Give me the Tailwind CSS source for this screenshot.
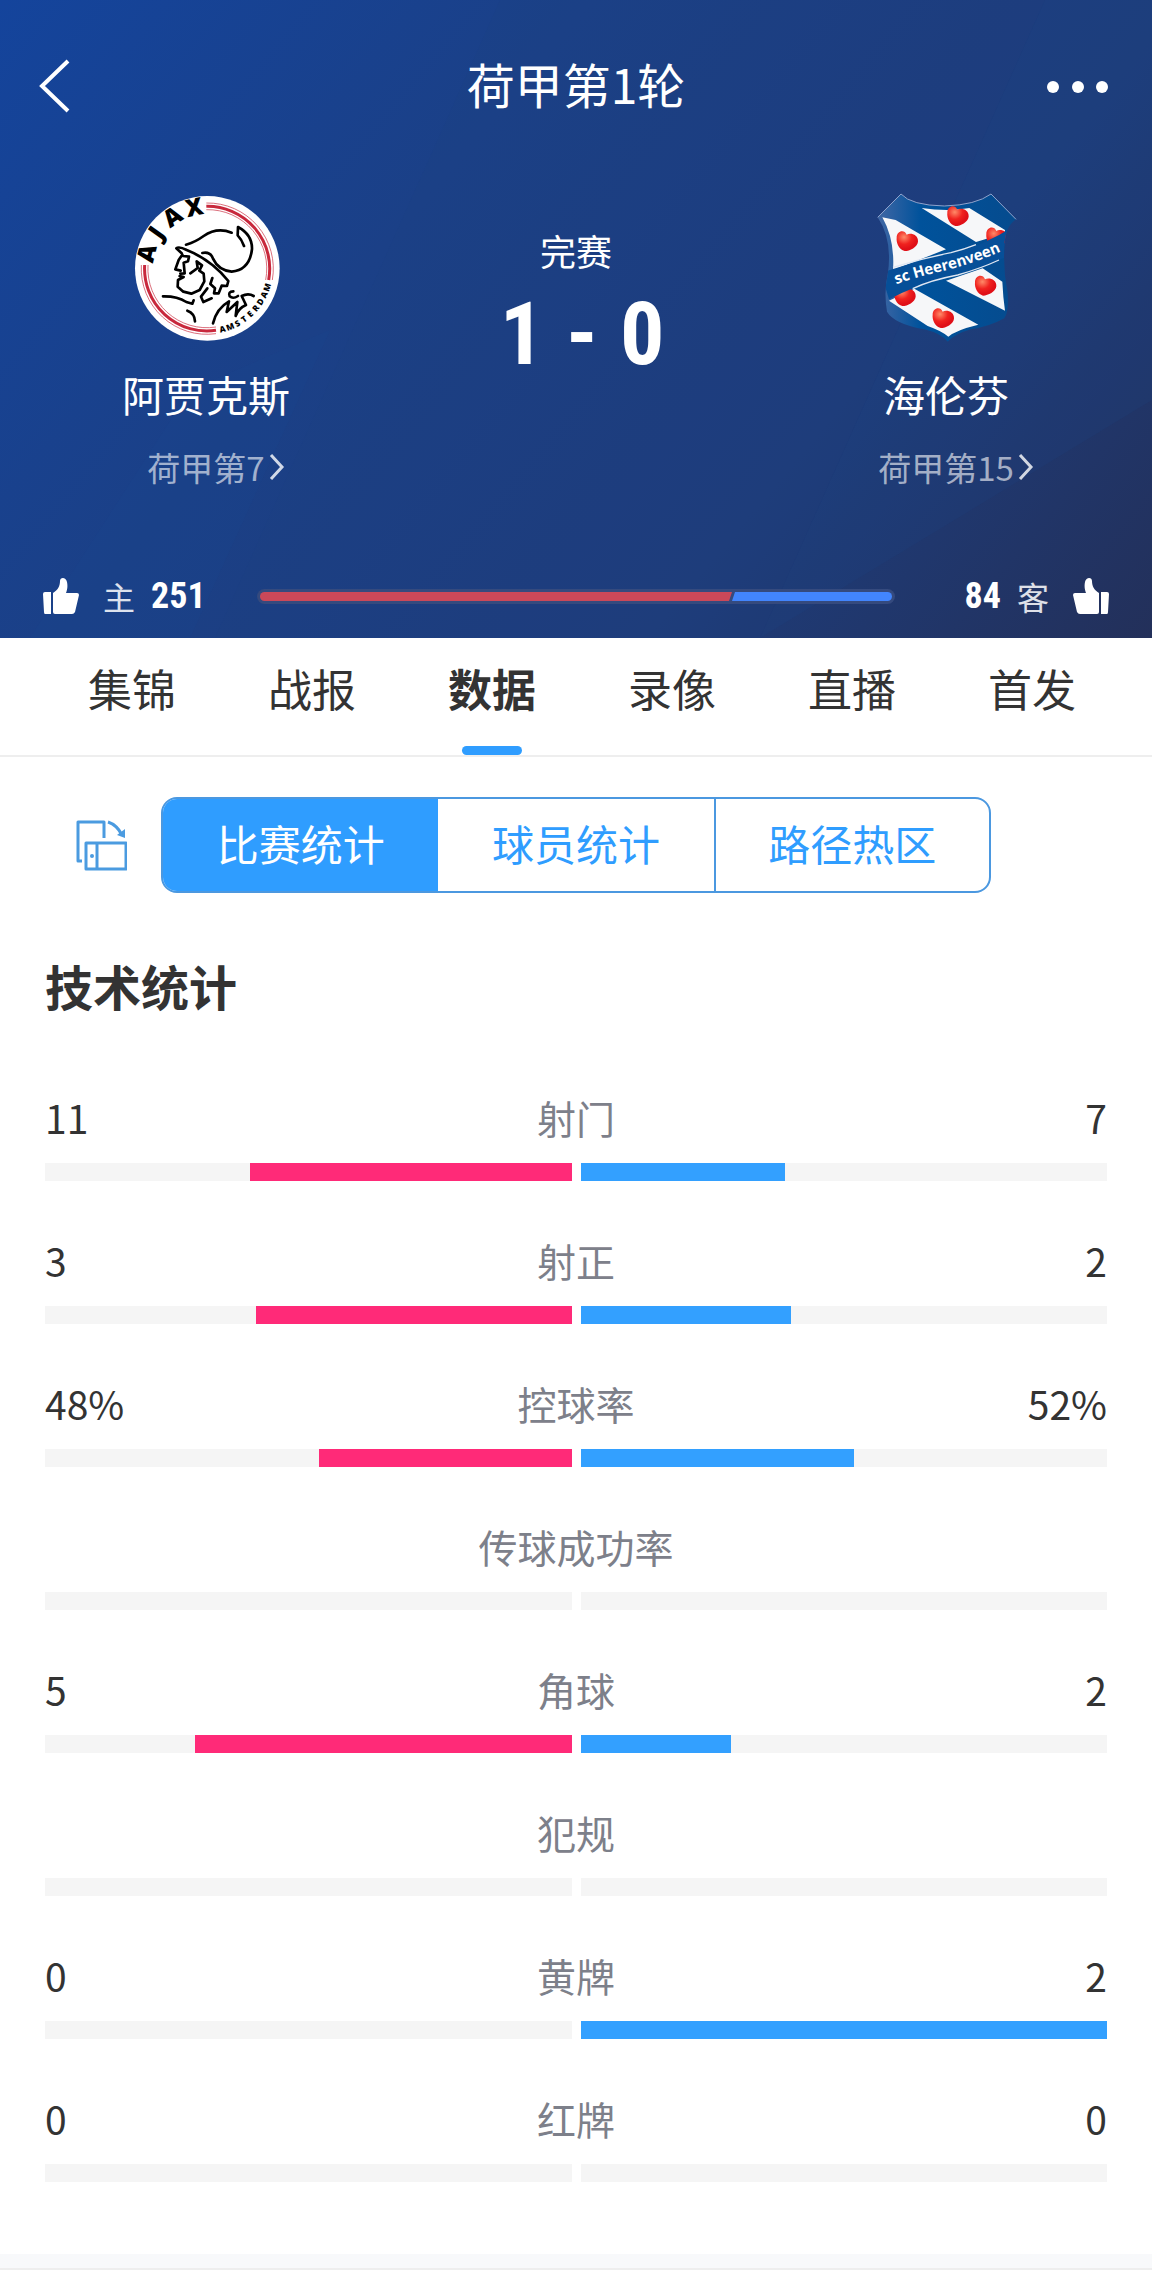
<!DOCTYPE html>
<html lang="zh-CN">
<head>
    <meta charset="UTF-8">
    <meta name="viewport" content="width=device-width, initial-scale=1.0">
    <title>荷甲第1轮</title>
    <script src="https://cdn.jsdelivr.net/npm/@tailwindcss/browser@4"></script>
</head>
<body class="bg-white text-[#333] font-['Noto_Sans_CJK_SC',sans-serif]">
    <!-- Match header -->
    <header class="relative overflow-hidden bg-linear-[130deg,#14449c_0%,#1b4087_35%,#1e3c7a_70%,#23305a_100%] text-white">
        <svg class="absolute inset-0 w-full h-full" viewBox="0 0 1152 638" preserveAspectRatio="none" aria-hidden="true">
            <path d="M500 0H1045L760 638H215Z" fill="#1d3f83" opacity=".2"/>
            <path d="M1045 0H1152V400L760 638Z" fill="#1a4a90" opacity=".15"/>
            <path d="M190 390L330 330L190 638H30Z" fill="#1c4a94" opacity=".15"/>
        </svg>

        <nav class="relative h-[172px] px-9 flex items-center justify-between">
            <button class="w-[72px]" aria-label="返回">
                <svg class="w-9 h-14" viewBox="0 0 36 56" fill="none" stroke="#fff" stroke-width="4"><path d="M32 3L6 28L32 53"/></svg>
            </button>
            <h1 class="pb-1.5 text-[48px] leading-[64px]">荷甲第1轮</h1>
            <button class="w-[72px]" aria-label="更多">
                <svg class="w-[72px] h-14" viewBox="0 0 72 56" fill="#fff"><circle cx="9" cy="29" r="6"/><circle cx="34" cy="29" r="6"/><circle cx="58" cy="29" r="6"/></svg>
            </button>
        </nav>

        <div class="relative px-[21px] pt-2 grid grid-cols-3">
            <!-- Home team -->
            <div class="flex flex-col items-center">
                <svg class="w-[170px] h-[170px]" viewBox="0 0 510 510" fill="none" role="img" aria-label="AJAX">
                    <circle cx="259" cy="265" r="217" fill="#fff"/>
                    <g stroke="#c8283c">
                        <path stroke-width="9" d="M256 79A187 187 0 0 1 443 300M71 255A187 187 0 0 0 285 451"/>
                        <path stroke-width="2" d="M256 69A197 197 0 0 1 454 300M61 255A197 197 0 0 0 285 461M256 89A177 177 0 0 1 434 300M81 255A177 177 0 0 0 285 441"/>
                    </g>
                    <g id="ajaxLetters" fill="#000" text-anchor="middle" font-family="Open Sans, sans-serif" font-weight="800"></g>
                    <g stroke="#000" stroke-width="8" stroke-linecap="round" stroke-linejoin="round">
                        <path d="M195 194Q222 187 248 168Q288 140 332 158"/>
                        <path d="M369 198Q362 178 350 166L351 141Q394 164 393 207Q386 270 332 275Q292 271 276 236Q268 214 244 219"/>
                        <path d="M182 220L166 205Q174 198 197 210Q272 240 322 303L318 318L302 317L293 340L279 340L282 325L268 312L274 294"/>
                        <path d="M184 224L173 240L163 268L179 272M186 228L204 230L201 244L188 248L191 280L178 281M176 288L188 291L171 300L170 320L187 335L211 341L236 330L250 304L248 281L235 272L243 256L227 244L230 264L208 280"/>
                        <path d="M126 349Q168 348 196 366L214 371L218 361"/>
                        <path d="M199 392Q221 400 222 424"/>
                        <path d="M259 325L240 350L247 366L272 355"/>
                        <path d="M276 430Q287 385 324 364L317 396L349 366L344 408Q352 385 375 375L362 348Q382 338 398 348M337 334Q320 335 326 349Q336 358 351 348"/>
                    </g>
                </svg>
                <div class="mt-3.5 text-[42px] leading-[60px]">阿贾克斯</div>
                <a href="#" class="mt-[19px] pl-5 flex items-center gap-1 text-[33px] leading-[48px] text-white/60">荷甲第7
                    <svg class="w-4 h-7" viewBox="0 0 16 28" fill="none" stroke="#fff" stroke-opacity=".8" stroke-width="3"><path d="M2 2L13 14L2 26"/></svg>
                </a>
            </div>

            <!-- Score -->
            <div class="mt-[46px] flex flex-col items-center">
                <div class="text-[36px] leading-[48px]">完赛</div>
                <div class="mt-3 pl-3 flex gap-[22px] text-[88px] leading-[96px] font-bold font-['Roboto_Condensed',Roboto,sans-serif]">
                    <span>1</span><span>-</span><span>0</span>
                </div>
            </div>

            <!-- Away team -->
            <div class="flex flex-col items-center">
                <svg class="w-[170px] h-[170px]" viewBox="0 0 510 510" role="img" aria-label="sc Heerenveen">
                    <defs>
                        <clipPath id="shield"><path d="M120 42Q150 76 250 78Q345 75 390 42L465 118Q432 140 430 200Q426 270 440 340Q444 395 430 415Q385 440 330 448Q285 460 260 485Q240 460 190 448Q100 432 78 395Q68 335 80 285Q96 180 50 112Z"/></clipPath>
                        <linearGradient id="shine" x1="0" y1="0" x2="1" y2="0"><stop offset="0" stop-color="#5a6fa8"/><stop offset=".35" stop-color="#00529b"/><stop offset="1" stop-color="#064a8c"/></linearGradient>
                        <radialGradient id="heart" cx=".35" cy=".3" r=".6"><stop offset="0" stop-color="#ff8a68"/><stop offset=".6" stop-color="#f0221f"/><stop offset="1" stop-color="#e01018"/></radialGradient>
                        <path id="heartShape" d="M-32 -8C-32 -30 -8 -34 -2 -17C8 -24 34 -18 32 4C30 20 8 32 -8 32C-24 28 -34 8 -32 -8Z"/>
                        <path id="ribbonLine" d="M106 313Q170 290 250 272Q340 250 425 212"/>
                    </defs>
                    <g clip-path="url(#shield)">
                        <path fill="url(#shine)" d="M0 0H510V510H0Z"/>
                        <path fill="#f6f7f9" d="M64 112L104 120L255 208L96 270Q102 180 64 112Z"/>
                        <path fill="#f6f7f9" d="M182 84Q260 96 325 84L432 150V160L345 186Z"/>
                        <path fill="#f6f7f9" d="M255 302L365 265L424 305Q426 350 432 392Z"/>
                        <path fill="#f6f7f9" d="M84 362L160 326L352 434Q285 450 262 470Q240 452 200 438Z"/>
                        <g fill="url(#heart)">
                            <use href="#heartShape" x="139" y="181"/>
                            <use href="#heartShape" x="291" y="106"/>
                            <use href="#heartShape" x="408" y="170"/>
                            <use href="#heartShape" x="374" y="315"/>
                            <use href="#heartShape" x="132" y="346"/>
                            <use href="#heartShape" x="247" y="412"/>
                        </g>
                        <path fill="#064f98" d="M60 278Q180 240 270 222Q370 196 460 138V220Q380 260 270 286Q160 318 84 358Z"/>
                        <path fill="none" stroke="#dfe6f2" stroke-width="4" d="M96 262Q180 236 270 218Q310 208 345 194M155 326Q210 300 290 285Q360 265 414 240"/>
                    </g>
                    <path fill="none" stroke="#8fa3cc" stroke-width="3" d="M120 42Q150 76 250 78Q345 75 390 42L465 118M120 42L50 112"/>
                    <text fill="#fff" font-family="Open Sans, sans-serif" font-size="45" font-weight="700"><textPath href="#ribbonLine">sc Heerenveen</textPath></text>
                </svg>
                <div class="mt-3.5 text-[42px] leading-[60px]">海伦芬</div>
                <a href="#" class="mt-[19px] pl-5 flex items-center gap-1 text-[33px] leading-[48px] text-white/60">荷甲第15
                    <svg class="w-4 h-7" viewBox="0 0 16 28" fill="none" stroke="#fff" stroke-opacity=".8" stroke-width="3"><path d="M2 2L13 14L2 26"/></svg>
                </a>
            </div>
        </div>

        <!-- Votes -->
        <div class="relative mt-[87px] px-[43px] pb-6 flex items-center">
            <div class="w-[214px] h-9 flex items-center">
                <button aria-label="支持主队">
                    <svg class="w-9 h-9" viewBox="0 0 36 36" fill="#fff"><path d="M0 16Q0 14 2 14H8V36H2Q1 36 1 34ZM10 15C15 12 17 8 17 3C17 -1 23 -1 24 4C25 9 24 12 23 15H34Q36 15 36 17L32 34Q31 36 29 36H12Q10 36 10 34Z"/></svg>
                </button>
                <span class="ml-6 text-[32px] leading-9 text-white/85">主</span>
                <span class="ml-4 text-[36px] leading-9 font-bold font-['Roboto_Condensed',Roboto,sans-serif]">251</span>
            </div>
            <div class="flex-1 h-[15px] p-[3px] rounded-full bg-[#354a7e]">
                <svg class="block w-full h-[9px] rounded-full" viewBox="0 0 632 9" preserveAspectRatio="none"><path d="M0 0H472L469 9H0Z" fill="#cb4859"/><path d="M475 0H632V9H472Z" fill="#4285fd"/></svg>
            </div>
            <div class="w-[214px] h-9 flex items-center justify-end">
                <span class="mr-4 text-[36px] leading-9 font-bold font-['Roboto_Condensed',Roboto,sans-serif]">84</span>
                <span class="mr-6 text-[32px] leading-9 text-white/85">客</span>
                <button aria-label="支持客队">
                    <svg class="w-9 h-9 -scale-x-100" viewBox="0 0 36 36" fill="#fff"><path d="M0 16Q0 14 2 14H8V36H2Q1 36 1 34ZM10 15C15 12 17 8 17 3C17 -1 23 -1 24 4C25 9 24 12 23 15H34Q36 15 36 17L32 34Q31 36 29 36H12Q10 36 10 34Z"/></svg>
                </button>
            </div>
        </div>
    </header>

    <!-- Tabs -->
    <nav class="pl-[42px] pr-[30px] grid grid-cols-6 border-b-2 border-[#eee] text-[44px] leading-[64px]">
        <button class="pt-[18px] pb-[35px]">集锦</button>
        <button class="pt-[18px] pb-[35px]">战报</button>
        <button class="pt-[18px] flex flex-col items-center gap-[26px] font-bold">数据<span class="w-[60px] h-[9px] rounded-full bg-[#2f9dff]"></span></button>
        <button class="pt-[18px] pb-[35px]">录像</button>
        <button class="pt-[18px] pb-[35px]">直播</button>
        <button class="pt-[18px] pb-[35px]">首发</button>
    </nav>

    <main>
        <div class="pt-10 px-[161px] flex">
            <button class="-ml-[86px] mr-[34px] shrink-0" aria-label="横屏">
                <svg class="w-[52px] h-[52px]" viewBox="0 0 52 52" fill="none" stroke="#4b9be0" stroke-width="3" stroke-linejoin="round">
                    <path d="M7 42H3V3H29V19"/>
                    <rect x="11" y="24" width="40" height="26"/><path d="M22 24V50"/>
                    <path d="M33 3Q42 6 47 16"/><path d="M42 16L50 19V10Z" fill="#4b9be0" stroke="none"/>
                    <circle cx="17" cy="37" r="2" fill="#4b9be0" stroke="none"/>
                </svg>
            </button>
            <div class="flex-1 grid grid-cols-3 h-24 rounded-2xl border-2 border-[#4b98e0] overflow-hidden text-[42px] text-[#2f9dff]">
                <button class="pb-1.5 bg-[#2f9dff] text-white">比赛统计</button>
                <button class="pb-1.5">球员统计</button>
                <button class="pb-1.5 border-l-2 border-[#4b98e0]">路径热区</button>
            </div>
        </div>

        <section class="px-[45px] pt-[60px] pb-[72px]">
            <h2 class="text-[48px] leading-[64px] font-bold">技术统计</h2>
            <ul id="statsList" class="mt-[72px] space-y-[51px]"></ul>
        </section>
    </main>

    <footer class="h-4 bg-[#f8f9fb] border-b-2 border-[#eee]"></footer>

    <script>
        const stats = [
            { name: '射门', home: 11, away: 7 },
            { name: '射正', home: 3, away: 2 },
            { name: '控球率', home: 48, away: 52, unit: '%' },
            { name: '传球成功率' },
            { name: '角球', home: 5, away: 2 },
            { name: '犯规' },
            { name: '黄牌', home: 0, away: 2 },
            { name: '红牌', home: 0, away: 0 }
        ];

        // Stat rows
        stats.forEach(stat => {
            const total = (stat.home || 0) + (stat.away || 0);
            const homeWidth = total ? stat.home / total * 100 : 0;
            const awayWidth = total ? stat.away / total * 100 : 0;
            const text = value => value === undefined ? '' : value + (stat.unit || '');

            const item = document.createElement('li');
            item.innerHTML = `
                <div class="grid grid-cols-3 text-[39px] leading-[56px]">
                    <span>${text(stat.home)}</span>
                    <span class="text-center text-[#7d808a]">${stat.name}</span>
                    <span class="text-right">${text(stat.away)}</span>
                </div>
                <div class="mt-[18px] grid grid-cols-2 gap-[9px]">
                    <div class="h-[18px] flex justify-end bg-[#f5f5f5]"><div class="bg-[#ff2a78]" style="width: ${homeWidth}%"></div></div>
                    <div class="h-[18px] flex bg-[#f5f5f5]"><div class="bg-[#33a0ff]" style="width: ${awayWidth}%"></div></div>
                </div>
            `;
            document.getElementById('statsList').appendChild(item);
        });

        // Letters round the edge of the home crest
        const crest = document.getElementById('ajaxLetters');
        function addLetter(letter, size, y, angle) {
            const node = document.createElementNS('http://www.w3.org/2000/svg', 'text');
            node.setAttribute('x', 259);
            node.setAttribute('y', y);
            node.setAttribute('font-size', size);
            node.setAttribute('transform', `rotate(${angle} 259 265)`);
            node.textContent = letter;
            crest.appendChild(node);
        }
        [...'AJAX'].forEach((letter, i) => addLetter(letter, 72, 103, [-76, -55, -34, -12][i]));
        [...'AMSTERDAM'].forEach((letter, i) => addLetter(letter, 25, 462, -(14 + i * 7.3)));
    </script>
</body>
</html>
